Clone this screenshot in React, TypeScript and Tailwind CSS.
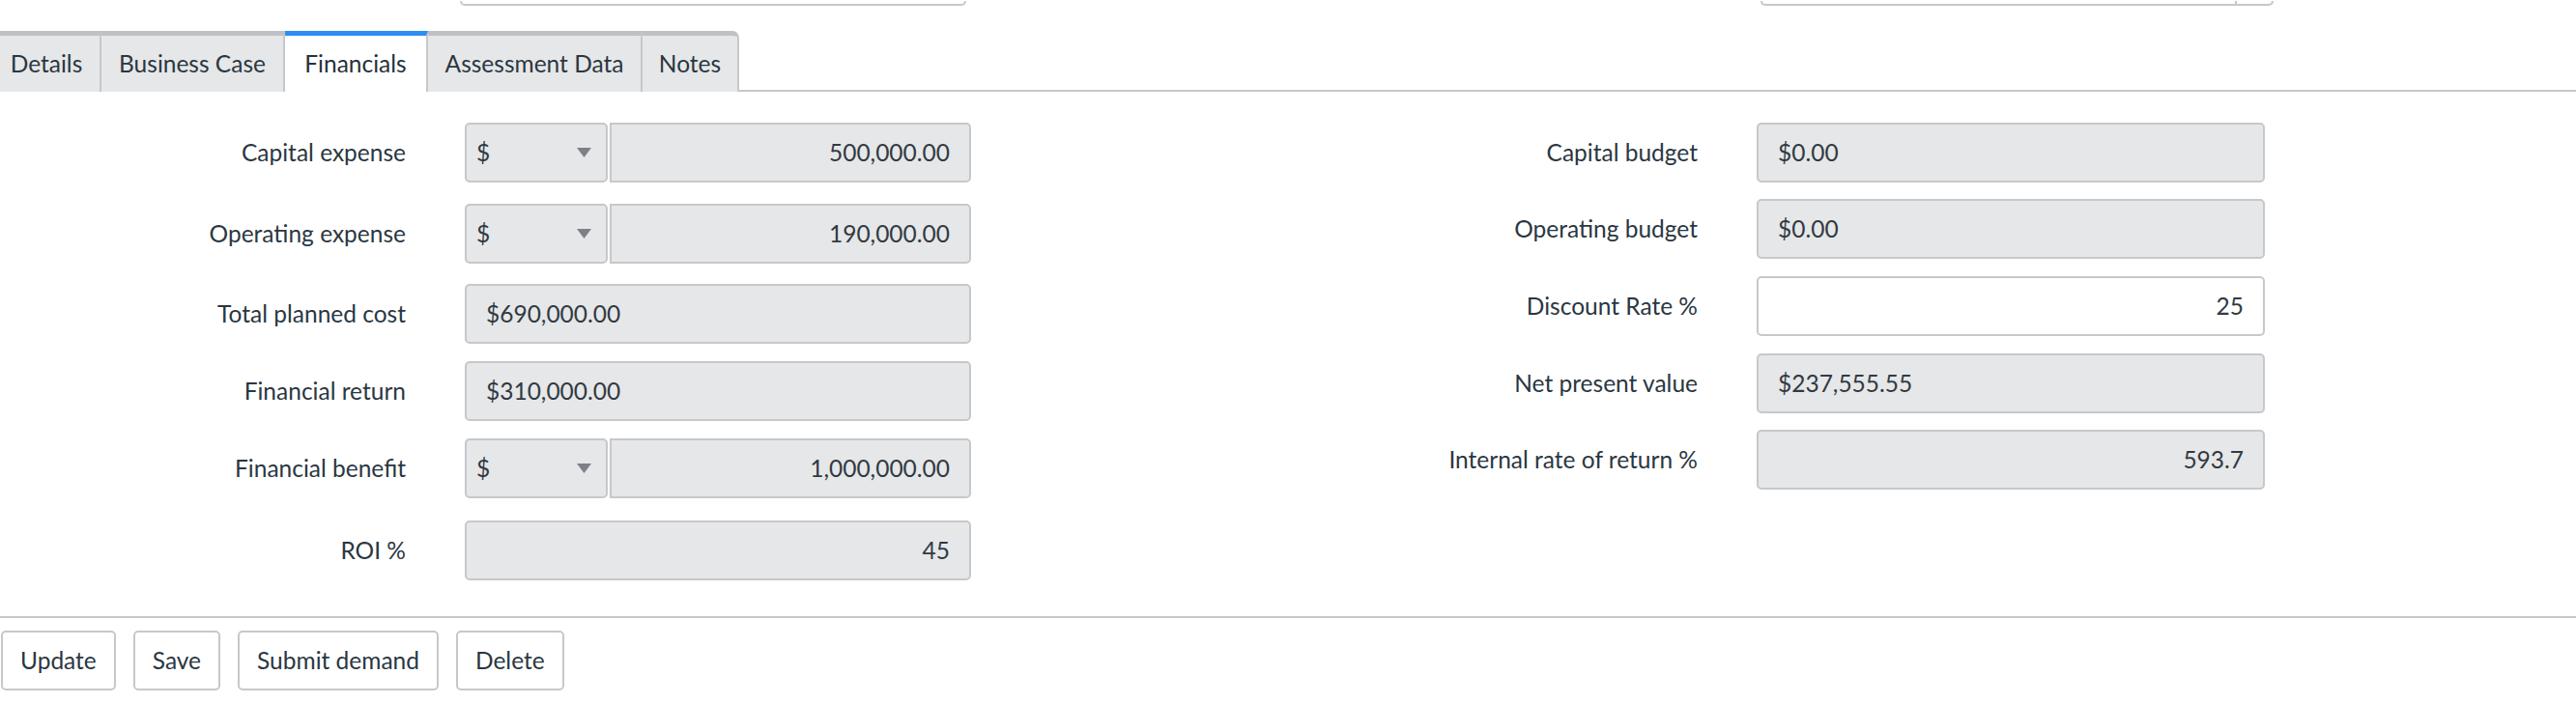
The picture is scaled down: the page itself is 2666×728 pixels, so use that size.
import React from "react";

type Field = {
  label: string;
  value: string;
  currency?: boolean;
  align?: "left" | "right";
  editable?: boolean;
  gap: string;
};

const leftFields: Field[] = [
  { label: "Capital expense", value: "500,000.00", currency: true, gap: "mb-[22px]" },
  { label: "Operating expense", value: "190,000.00", currency: true, gap: "mb-[21px]" },
  { label: "Total planned cost", value: "$690,000.00", align: "left", gap: "mb-[18px]" },
  { label: "Financial return", value: "$310,000.00", align: "left", gap: "mb-[18px]" },
  { label: "Financial benefit", value: "1,000,000.00", currency: true, gap: "mb-[23px]" },
  { label: "ROI %", value: "45", gap: "mb-0" },
];

const rightFields: Field[] = [
  { label: "Capital budget", value: "$0.00", align: "left", gap: "mb-[17px]" },
  { label: "Operating budget", value: "$0.00", align: "left", gap: "mb-[18px]" },
  { label: "Discount Rate %", value: "25", editable: true, gap: "mb-[18px]" },
  { label: "Net present value", value: "$237,555.55", align: "left", gap: "mb-[17px]" },
  { label: "Internal rate of return %", value: "593.7", gap: "mb-0" },
];

const tabs = [
  { name: "Details", width: "w-[112px] -ml-[7px]" },
  { name: "Business Case", width: "w-[190px]" },
  { name: "Financials", width: "w-[148px]", active: true },
  { name: "Assessment Data", width: "w-[222px]" },
  { name: "Notes", width: "w-[100px] rounded-tr-[7px]" },
];

function CaretDown() {
  return (
    <svg width="15" height="10" viewBox="0 0 15 10">
      <polygon points="0,0 15,0 7.5,10" fill="#7c8187" />
    </svg>
  );
}

function Box({ field, width }: { field: Field; width: string }) {
  if (field.currency) {
    return (
      <div className={`flex h-[62px] ${width} gap-[2px]`}>
        <div className="flex w-[148px] items-center justify-between rounded-[5px] border-2 border-[#c6c8cb] bg-[#e6e7e8] pl-[10px] pr-[15px]">
          <span>$</span>
          <CaretDown />
        </div>
        <div className="flex flex-1 items-center justify-end rounded-r-[5px] border-2 border-[#c6c8cb] bg-[#e6e7e8] pr-[20px]">
          {field.value}
        </div>
      </div>
    );
  }
  return (
    <div
      className={`flex h-[62px] ${width} items-center rounded-[5px] border-2 border-[#c6c8cb] px-[20px] ${
        field.editable ? "bg-white" : "bg-[#e6e7e8]"
      } ${field.align === "left" ? "justify-start" : "justify-end"}`}
    >
      {field.value}
    </div>
  );
}

function Row({ field, labelWidth, boxWidth }: { field: Field; labelWidth: string; boxWidth: string }) {
  return (
    <div className={`flex items-center gap-[61px] ${field.gap}`}>
      <div className={`${labelWidth} text-right text-[#2a3742]`}>{field.label}</div>
      <Box field={field} width={boxWidth} />
    </div>
  );
}

export default function App() {
  return (
    <div className="h-[728px] w-[2666px] overflow-hidden bg-white font-[Lato,_sans-serif] text-[24.5px] text-[#313a43]">
      {/* fields cut off at the top */}
      <div className="flex h-[6px] items-end">
        <div className="ml-[476px] h-[5px] w-[524px] rounded-b-[5px] border-x-2 border-b-2 border-[#c6c8cb]" />
        <div className="ml-[822px] flex h-[5px] w-[531px]">
          <div className="flex-1 rounded-bl-[5px] border-b-2 border-l-2 border-[#c6c8cb]" />
          <div className="w-[40px] rounded-br-[5px] border-x-2 border-b-2 border-[#c6c8cb]" />
        </div>
      </div>

      {/* tabs */}
      <div className="mt-[26px] flex h-[63px] border-b-2 border-[#c6c8cb]">
        {tabs.map((t) => (
          <div
            key={t.name}
            className={`-mb-[2px] flex items-center justify-center border-r-2 border-t-[5px] ${t.width} ${
              t.active
                ? "border-r-[#c6c8cb] border-t-[#2e8ef0] bg-white text-[#26313a]"
                : "border-r-[#c6c8cb] border-t-[#bfc2c5] bg-[#e6e7e8] text-[#2a3742]"
            }`}
          >
            {t.name}
          </div>
        ))}
      </div>

      {/* form */}
      <div className="grid h-[543px] grid-cols-2 pt-[32px]">
        <div className="flex flex-col">
          {leftFields.map((f) => (
            <Row key={f.label} field={f} labelWidth="w-[420px]" boxWidth="w-[524px]" />
          ))}
        </div>
        <div className="flex flex-col">
          {rightFields.map((f) => (
            <Row key={f.label} field={f} labelWidth="w-[424px]" boxWidth="w-[526px]" />
          ))}
        </div>
      </div>

      {/* actions */}
      <div className="flex gap-[18px] border-t-2 border-[#c6c8cb] pt-[13px]">
        {["Update", "Save", "Submit demand", "Delete"].map((b) => (
          <button
            key={b}
            className="h-[62px] rounded-[5px] border-2 border-[#c6c8cb] bg-white px-[18px] text-[#2a3742] first:ml-[1px]"
          >
            {b}
          </button>
        ))}
      </div>
    </div>
  );
}
